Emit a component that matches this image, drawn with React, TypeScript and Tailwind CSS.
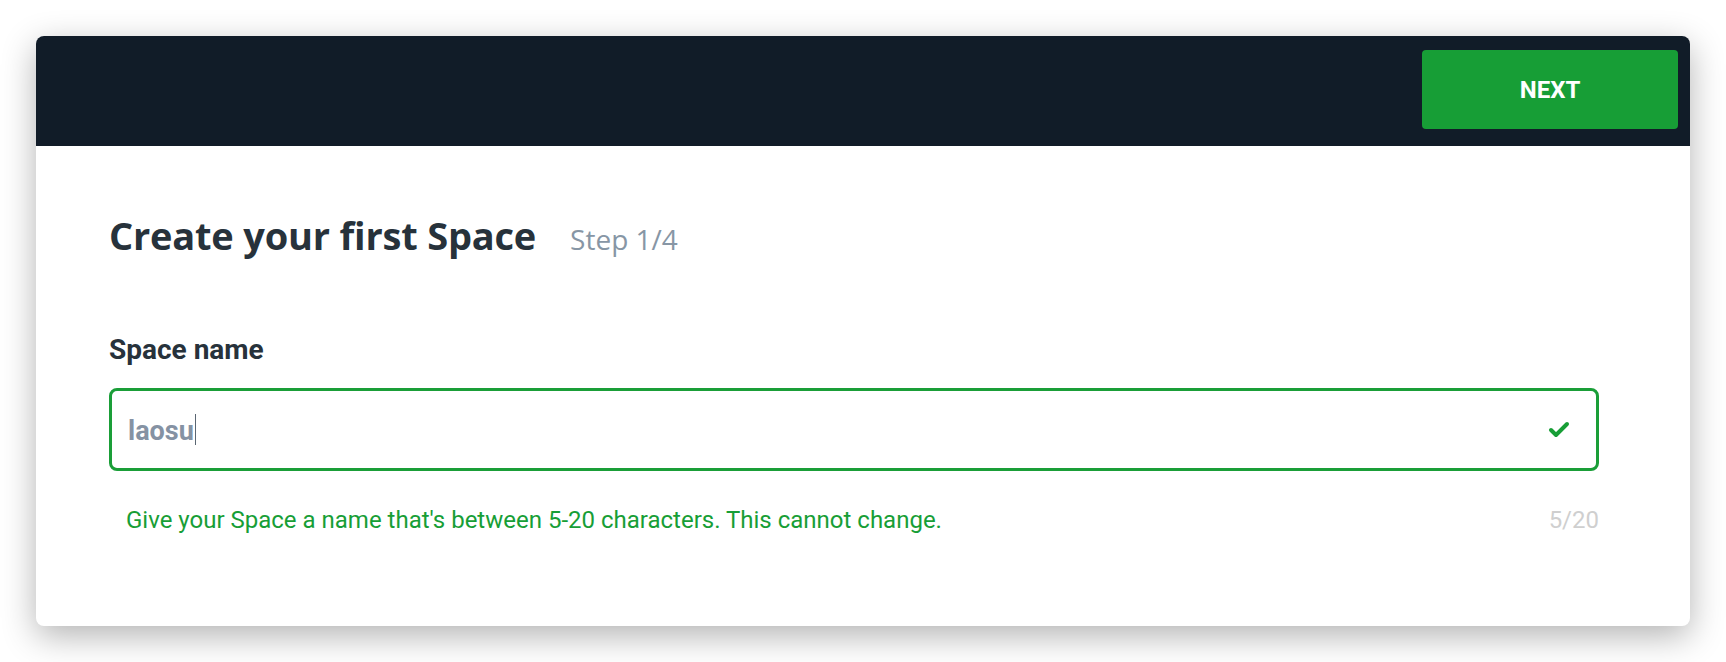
import { Check } from "lucide-react"

export default function App() {
  return (
    <div className="min-h-[662px] w-full bg-white pt-[36px] pl-[36px] pr-[36px]">
      <div className="w-[1654px] h-[590px] rounded-lg bg-white shadow-[0_10px_34px_rgba(0,0,0,0.3)] overflow-hidden flex flex-col">
        {/* Header */}
        <div className="h-[110px] bg-[#111c28] flex items-start justify-end pt-[14px] pr-[12px] shrink-0">
          <button className="w-[256px] h-[79px] rounded bg-[#179e36] text-white text-[24px] leading-none font-bold font-['Roboto',sans-serif]">
            NEXT
          </button>
        </div>

        {/* Body */}
        <div className="flex-1 pl-[73px] pr-[91px] pt-[70px] font-['Roboto',sans-serif]">
          <div className="flex items-baseline gap-[34px]">
            <h1 className="text-[38px] leading-none font-bold text-[#27323b] font-['Open_Sans',sans-serif] tracking-[-0.2px]">
              Create your first Space
            </h1>
            <span className="text-[28px] leading-none text-[#8796a5] font-['Open_Sans',sans-serif]">Step 1/4</span>
          </div>

          <label className="block mt-[82px] text-[28px] leading-none font-bold text-[#27323b]">Space name</label>

          <div className="mt-[24px] h-[83px] rounded-lg border-[3px] border-[#1a9e38] flex items-center pt-1 pl-[16px] pr-[25px]">
            <span className="text-[27px] leading-none font-bold text-[#8592a3]">laosu</span>
            <span className="w-px h-[31px] bg-[#5a6672] ml-[1px] -mt-1" />
            <Check className="ml-auto -mt-1 w-[24px] h-[24px] text-[#179e36]" strokeWidth={4} />
          </div>

          <div className="mt-[37px] flex items-baseline justify-between pl-[17px]">
            <p className="text-[24px] leading-none text-[#179e36]">
              Give your Space a name that's between 5-20 characters. This cannot change.
            </p>
            <span className="text-[24px] leading-none text-[#cfcfcf]">5/20</span>
          </div>
        </div>
      </div>
    </div>
  )
}
